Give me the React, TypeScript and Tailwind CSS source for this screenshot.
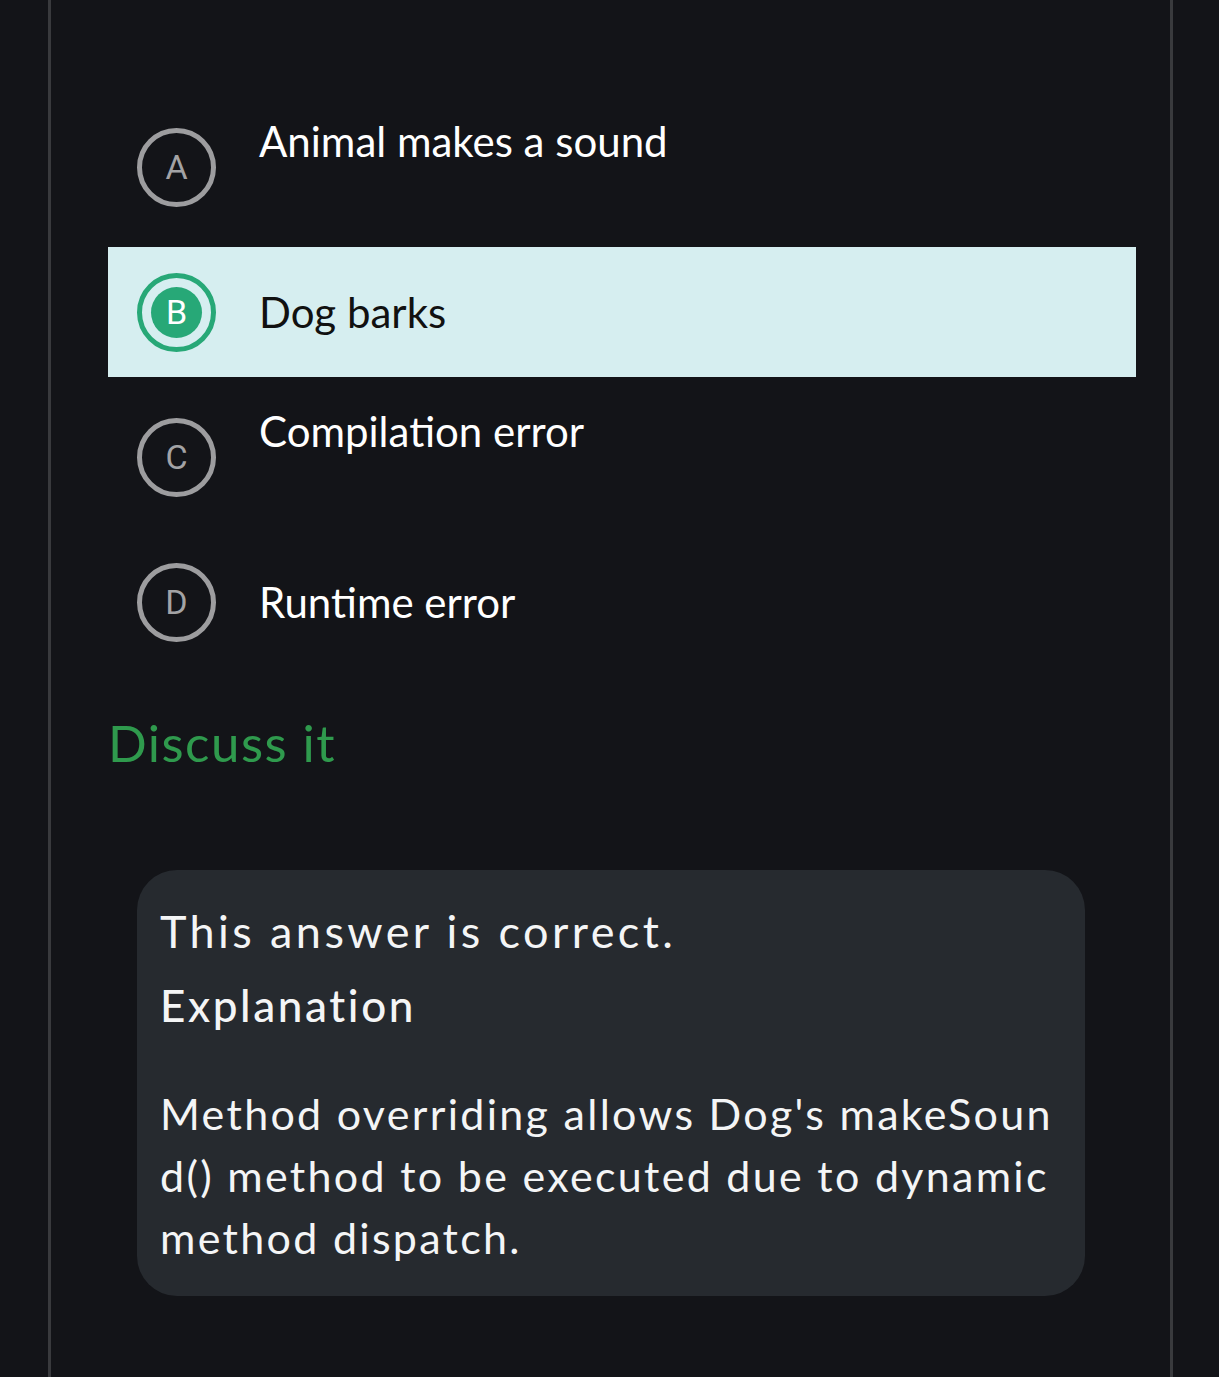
const options = [
  { key: "A", text: "Animal makes a sound", extra: true },
  { key: "B", text: "Dog barks", correct: true },
  { key: "C", text: "Compilation error", extra: true },
  { key: "D", text: "Runtime error" },
]

function Badge({ letter, correct }: { letter: string; correct?: boolean }) {
  if (correct) {
    return (
      <div className="flex h-[79px] w-[79px] shrink-0 items-center justify-center rounded-full border-[5px] border-[#27a877]">
        <div className="flex h-[51px] w-[51px] items-center justify-center rounded-full bg-[#27a877] font-['Roboto',sans-serif] text-[34px] leading-none text-white">
          {letter}
        </div>
      </div>
    )
  }
  return (
    <div className="flex h-[79px] w-[79px] shrink-0 items-center justify-center rounded-full border-[5px] border-[#9d9d9f] font-['Roboto',sans-serif] text-[34px] leading-none text-[#a3a3a5]">
      {letter}
    </div>
  )
}

export default function App() {
  return (
    <div className="min-h-[1377px] bg-[#131418]">
      <div className="ml-[48px] min-h-[1377px] w-[1125px] border-x-[3px] border-[#393a3d] pl-[57px] pr-[34px] pt-[102px]">
        {/* Options */}
        <div className="flex flex-col gap-[15px]">
          {options.map((o) => (
            <div
              key={o.key}
              className={`flex h-[130px] items-center gap-[43px] pl-[29px] ${
                o.correct ? "bg-[#d6eef0]" : ""
              }`}
            >
              <Badge letter={o.key} correct={o.correct} />
              <div className="flex flex-col">
                <span
                  className={`font-['Lato',sans-serif] text-[42px] leading-[54px] ${
                    o.correct ? "text-[#111]" : "text-white"
                  }`}
                >
                  {o.text}
                </span>
                {o.extra && <span className="h-[52px]" />}
              </div>
            </div>
          ))}
        </div>

        {/* Discuss */}
        <div className="mt-[46px] font-['Lato',sans-serif] text-[51px] leading-[60px] tracking-[1.5px] text-[#2f9a4d]">
          Discuss it
        </div>

        {/* Explanation card */}
        <div className="ml-[29px] mt-[97px] w-[948px] rounded-[40px] bg-[#262a2f] px-[23px] pb-[27px] pt-[30px] font-['Lato',sans-serif] text-[#f4f5f6]">
          <div className="text-[45px] leading-[62px] tracking-[3.4px]">This answer is correct.</div>
          <div className="mt-[12px] text-[44px] font-medium leading-[62px] tracking-[2.6px]">
            Explanation
          </div>
          <div className="mt-[47px] text-[43px] leading-[62px] tracking-[2.3px]">
            <span className="block">Method overriding allows Dog's makeSoun</span>
            <span className="block">d() method to be executed due to dynamic</span>
            <span className="block">method dispatch.</span>
          </div>
        </div>
      </div>
    </div>
  )
}
